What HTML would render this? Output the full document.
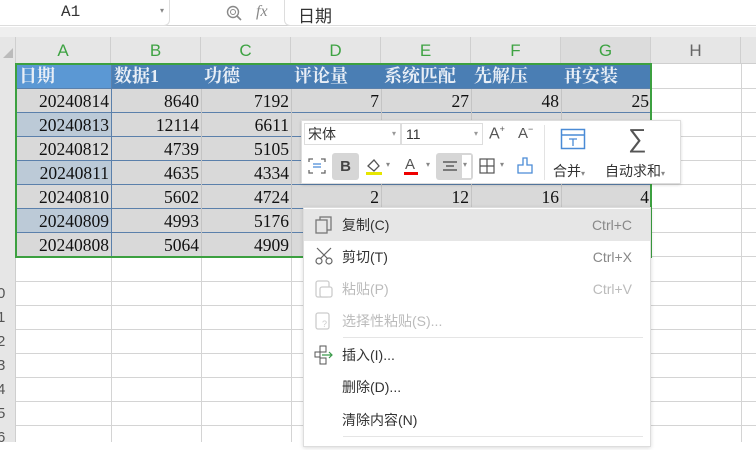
<!DOCTYPE html>
<html><head><meta charset="utf-8"><style>
*{margin:0;padding:0;box-sizing:border-box}
body{width:756px;height:442px;overflow:hidden;background:#fff;position:relative;font-family:"Liberation Sans","Noto Sans CJK SC",sans-serif}
.a{position:absolute}
.serif{font-family:"Liberation Serif","Noto Serif CJK SC",serif}
.cell{position:absolute;font-size:17.5px;text-align:right;padding-right:2px;line-height:24px;color:#111}
.hd{position:absolute;color:#e8eef6;font-size:18px;font-weight:bold;line-height:24px;padding-left:3px;font-family:"Liberation Serif","Noto Serif CJK SC",serif}
.ch{position:absolute;top:37px;height:27px;line-height:27px;text-align:center;color:#3ea343;font-size:17px;border-right:1px solid #cfcfcf}
.mi{position:absolute;left:304px;width:346px;height:32px;line-height:32px;font-size:14px;color:#333}
.mi .t{position:absolute;left:38px}
.mi .k{position:absolute;right:18px;color:#888}
.dis{color:#bbb}
</style></head><body>
<div class="a" style="left:0;top:0;width:756px;height:26px;background:#fff;border-bottom:1px solid #d0d0d0"></div>
<div class="a" style="left:0;top:0;width:170px;height:26px;border:1px solid #ddd;border-top:0;border-left:0;border-radius:0 0 6px 0"></div>
<div class="a" style="left:61px;top:3px;font-size:16px;color:#333;font-family:'Liberation Mono',monospace">A1</div>
<div class="a" style="left:160px;top:6px;font-size:8px;color:#888">▾</div>
<svg class="a" style="left:225px;top:4px" width="18" height="18"><circle cx="8" cy="8" r="5.5" fill="none" stroke="#888" stroke-width="1.4"/><circle cx="8" cy="8" r="2.5" fill="none" stroke="#888" stroke-width="1"/><path d="M12 12l4 4" stroke="#888" stroke-width="1.6"/></svg>
<div class="a" style="left:256px;top:3px;font-size:16px;color:#888;font-style:italic;font-family:'Liberation Serif',serif">fx</div>
<div class="a" style="left:284px;top:0;width:472px;height:26px;border-left:1px solid #ddd;border-bottom:1px solid #ddd;border-radius:0 0 0 6px"></div>
<div class="a" style="left:298px;top:2px;font-size:17px;color:#333">日期</div>
<div class="a" style="left:0;top:27px;width:756px;height:10px;background:#efefef"></div>
<div class="a" style="left:0;top:37px;width:756px;height:27px;background:#e6e6e6;border-bottom:1px solid #cfcfcf"></div>
<div class="a" style="left:0;top:37px;width:16px;height:27px;background:#e6e6e6;border-right:1px solid #cfcfcf"></div>
<div class="a" style="left:3px;top:48px;width:0;height:0;border-left:10px solid transparent;border-bottom:10px solid #bbb"></div>
<div class="ch" style="left:16px;width:95px">A</div>
<div class="ch" style="left:111px;width:90px">B</div>
<div class="ch" style="left:201px;width:90px">C</div>
<div class="ch" style="left:291px;width:90px">D</div>
<div class="ch" style="left:381px;width:90px">E</div>
<div class="ch" style="left:471px;width:90px">F</div>
<div class="ch" style="left:561px;width:90px;background:#dcdcdc">G</div>
<div class="ch" style="left:651px;width:90px;color:#666">H</div>
<div class="a" style="left:0;top:64px;width:16px;height:378px;background:#e6e6e6;border-right:1px solid #cfcfcf"></div>
<div class="a" style="left:-3px;top:282px;font-size:15px;color:#555;line-height:24px">0<br>1<br>2<br>3<br>4<br>5<br>6</div>
<svg class="a" style="left:16px;top:64px" width="740" height="378">
<g stroke="#d4d4d4" stroke-width="1">
<line x1="0" y1="217.5" x2="740" y2="217.5"/><line x1="0" y1="241.5" x2="740" y2="241.5"/><line x1="0" y1="265.5" x2="740" y2="265.5"/><line x1="0" y1="289.5" x2="740" y2="289.5"/><line x1="0" y1="313.5" x2="740" y2="313.5"/><line x1="0" y1="337.5" x2="740" y2="337.5"/><line x1="0" y1="361.5" x2="740" y2="361.5"/>
<line x1="635" y1="24.5" x2="740" y2="24.5"/><line x1="635" y1="48.5" x2="740" y2="48.5"/><line x1="635" y1="72.5" x2="740" y2="72.5"/><line x1="635" y1="96.5" x2="740" y2="96.5"/><line x1="635" y1="120.5" x2="740" y2="120.5"/><line x1="635" y1="144.5" x2="740" y2="144.5"/><line x1="635" y1="168.5" x2="740" y2="168.5"/><line x1="635" y1="192.5" x2="740" y2="192.5"/>
<line x1="95.5" y1="193" x2="95.5" y2="378"/><line x1="185.5" y1="193" x2="185.5" y2="378"/><line x1="275.5" y1="193" x2="275.5" y2="378"/><line x1="725.5" y1="0" x2="725.5" y2="378"/>
</g></svg>
<div class="a" style="left:16px;top:64px;width:635px;height:193px;background:#d9d9d9"></div>
<div class="a" style="left:16px;top:64px;width:635px;height:25px;background:#4a7eb4"></div>
<div class="a" style="left:16px;top:64px;width:95px;height:25px;background:#5b98d4"></div>
<div class="a" style="left:16px;top:113px;width:95px;height:24px;background:#bccad7"></div>
<div class="a" style="left:16px;top:161px;width:95px;height:24px;background:#bccad7"></div>
<div class="a" style="left:16px;top:209px;width:95px;height:24px;background:#bccad7"></div>
<svg class="a" style="left:16px;top:64px" width="636" height="194">
<g stroke="#5b80ab" stroke-width="1">
<line x1="0" y1="24.5" x2="635" y2="24.5"/><line x1="0" y1="48.5" x2="635" y2="48.5"/><line x1="0" y1="72.5" x2="635" y2="72.5"/><line x1="0" y1="96.5" x2="635" y2="96.5"/><line x1="0" y1="120.5" x2="635" y2="120.5"/><line x1="0" y1="144.5" x2="635" y2="144.5"/><line x1="0" y1="168.5" x2="635" y2="168.5"/>
<line x1="95.5" y1="0" x2="95.5" y2="193"/></g>
<g stroke="#c4c4c4"><line x1="185.5" y1="25" x2="185.5" y2="193"/><line x1="275.5" y1="25" x2="275.5" y2="193"/><line x1="365.5" y1="25" x2="365.5" y2="193"/><line x1="455.5" y1="25" x2="455.5" y2="193"/><line x1="545.5" y1="25" x2="545.5" y2="193"/></g>
</svg>
<div class="hd" style="left:16px;top:64px">日期</div>
<div class="hd" style="left:111px;top:64px">数据1</div>
<div class="hd" style="left:201px;top:64px">功德</div>
<div class="hd" style="left:291px;top:64px">评论量</div>
<div class="hd" style="left:381px;top:64px">系统匹配</div>
<div class="hd" style="left:471px;top:64px">先解压</div>
<div class="hd" style="left:561px;top:64px">再安装</div>
<div class="serif">
<div class="cell" style="left:16px;top:89px;width:95px">20240814</div><div class="cell" style="left:111px;top:89px;width:90px">8640</div><div class="cell" style="left:201px;top:89px;width:90px">7192</div><div class="cell" style="left:291px;top:89px;width:90px">7</div><div class="cell" style="left:381px;top:89px;width:90px">27</div><div class="cell" style="left:471px;top:89px;width:90px">48</div><div class="cell" style="left:561px;top:89px;width:90px">25</div>
<div class="cell" style="left:16px;top:113px;width:95px">20240813</div><div class="cell" style="left:111px;top:113px;width:90px">12114</div><div class="cell" style="left:201px;top:113px;width:90px">6611</div>
<div class="cell" style="left:16px;top:137px;width:95px">20240812</div><div class="cell" style="left:111px;top:137px;width:90px">4739</div><div class="cell" style="left:201px;top:137px;width:90px">5105</div>
<div class="cell" style="left:16px;top:161px;width:95px">20240811</div><div class="cell" style="left:111px;top:161px;width:90px">4635</div><div class="cell" style="left:201px;top:161px;width:90px">4334</div>
<div class="cell" style="left:16px;top:185px;width:95px">20240810</div><div class="cell" style="left:111px;top:185px;width:90px">5602</div><div class="cell" style="left:201px;top:185px;width:90px">4724</div><div class="cell" style="left:291px;top:185px;width:90px">2</div><div class="cell" style="left:381px;top:185px;width:90px">12</div><div class="cell" style="left:471px;top:185px;width:90px">16</div><div class="cell" style="left:561px;top:185px;width:90px">4</div>
<div class="cell" style="left:16px;top:209px;width:95px">20240809</div><div class="cell" style="left:111px;top:209px;width:90px">4993</div><div class="cell" style="left:201px;top:209px;width:90px">5176</div>
<div class="cell" style="left:16px;top:233px;width:95px">20240808</div><div class="cell" style="left:111px;top:233px;width:90px">5064</div><div class="cell" style="left:201px;top:233px;width:90px">4909</div>
</div>
<div class="a" style="left:15px;top:63px;width:637px;height:195px;border:2px solid #3ca040"></div>
<div class="a" style="left:301px;top:120px;width:380px;height:64px;background:#fff;border:1px solid #ddd;box-shadow:0 1px 3px rgba(0,0,0,.15)"></div>
<div class="a" style="left:304px;top:123px;width:97px;height:22px;border:1px solid #ddd;font-size:14px;line-height:20px;padding-left:3px;color:#333">宋体<span style="position:absolute;right:4px;font-size:8px;color:#999">▾</span></div>
<div class="a" style="left:401px;top:123px;width:82px;height:22px;border:1px solid #ddd;font-size:14px;line-height:20px;padding-left:4px;color:#333">11<span style="position:absolute;right:4px;font-size:8px;color:#999">▾</span></div>
<div class="a" style="left:489px;top:124px;font-size:16px;color:#555">A<sup style="font-size:9px">+</sup></div>
<div class="a" style="left:518px;top:124px;font-size:15px;color:#555">A<sup style="font-size:9px">−</sup></div>
<div class="a" style="left:544px;top:125px;width:1px;height:55px;background:#e3e3e3"></div>
<svg class="a" style="left:560px;top:128px" width="26" height="22"><rect x="1.5" y="1.5" width="23" height="19" fill="none" stroke="#4a8bd6" stroke-width="1.5"/><line x1="1.5" y1="7" x2="24.5" y2="7" stroke="#4a8bd6" stroke-width="1.5"/><path d="M9 11h8M13 11v7" stroke="#4a8bd6" stroke-width="1.3"/></svg>
<div class="a" style="left:628px;top:124px;font-size:26px;color:#555;line-height:28px">∑</div>
<div class="a" style="left:553px;top:161px;font-size:14px;color:#333">合并<span style="font-size:8px;color:#888">▾</span></div>
<div class="a" style="left:605px;top:161px;font-size:14px;color:#333">自动求和<span style="font-size:8px;color:#888">▾</span></div>
<svg class="a" style="left:307px;top:157px" width="20" height="18"><path d="M2 5V2h4M14 2h4v3M2 13v3h4M14 16h4v-3" stroke="#666" fill="none" stroke-width="1.3"/><path d="M6 7h8M6 10h8" stroke="#4a8bd6" stroke-width="1.3"/></svg>
<div class="a" style="left:332px;top:153px;width:27px;height:27px;background:#d6d6d6;border-radius:3px;text-align:center;line-height:27px;font-weight:bold;font-size:15px;color:#444">B</div>
<svg class="a" style="left:364px;top:156px" width="20" height="21"><path d="M4 10l6-6 5 6-5 5z" stroke="#555" fill="none" stroke-width="1.3"/><rect x="2" y="16" width="16" height="3" fill="#e6e600"/></svg>
<div class="a" style="left:386px;top:160px;font-size:8px;color:#888">▾</div>
<div class="a" style="left:405px;top:156px;font-size:15px;color:#555">A</div>
<div class="a" style="left:404px;top:172px;width:14px;height:3px;background:#e00"></div>
<div class="a" style="left:426px;top:160px;font-size:8px;color:#888">▾</div>
<div class="a" style="left:436px;top:153px;width:37px;height:27px;background:#d6d6d6;border-radius:3px"></div>
<div class="a" style="left:462px;top:155px;width:9px;height:23px;background:#fff"></div>
<svg class="a" style="left:441px;top:159px" width="18" height="14"><path d="M2 3h14M5 7h8M2 11h14" stroke="#444" stroke-width="1.3"/></svg>
<div class="a" style="left:463px;top:160px;font-size:8px;color:#888">▾</div>
<svg class="a" style="left:478px;top:157px" width="18" height="18"><rect x="2" y="2" width="14" height="14" fill="none" stroke="#555" stroke-width="1.2"/><path d="M9 2v14M2 9h14" stroke="#555" stroke-width="1.2"/></svg>
<div class="a" style="left:500px;top:160px;font-size:8px;color:#888">▾</div>
<svg class="a" style="left:515px;top:156px" width="20" height="20"><path d="M8 2h4v7h5v8H3V9h5z" stroke="#4a8bd6" fill="none" stroke-width="1.3"/></svg>
<div class="a" style="left:303px;top:207px;width:348px;height:240px;background:#fff;border:1px solid #ddd;box-shadow:0 1px 4px rgba(0,0,0,.15)"></div>
<div class="mi" style="top:209px;background:#e6e6e6"><span class="t">复制(C)</span><span class="k">Ctrl+C</span></div>
<svg class="a" style="left:314px;top:215px" width="20" height="20"><rect x="6" y="2" width="11" height="13" fill="none" stroke="#777" stroke-width="1.3"/><rect x="2" y="5" width="11" height="13" fill="#e6e6e6" stroke="#777" stroke-width="1.3"/></svg>
<div class="mi" style="top:241px"><span class="t">剪切(T)</span><span class="k">Ctrl+X</span></div>
<svg class="a" style="left:314px;top:246px" width="20" height="20"><path d="M3 2l11 11M17 2L6 13" stroke="#666" stroke-width="1.2"/><circle cx="5" cy="15" r="3" fill="none" stroke="#666" stroke-width="1.2"/><circle cx="15" cy="15" r="3" fill="none" stroke="#666" stroke-width="1.2"/></svg>
<div class="mi dis" style="top:273px"><span class="t">粘贴(P)</span><span class="k" style="color:#bbb">Ctrl+V</span></div>
<svg class="a" style="left:314px;top:278px" width="20" height="22"><rect x="2" y="3" width="13" height="16" rx="2" fill="none" stroke="#ccc" stroke-width="1.3"/><rect x="6" y="9" width="12" height="10" rx="2" fill="#fff" stroke="#ccc" stroke-width="1.3"/></svg>
<div class="mi dis" style="top:305px"><span class="t">选择性粘贴(S)...</span></div>
<svg class="a" style="left:314px;top:310px" width="20" height="22"><rect x="2" y="3" width="13" height="16" rx="2" fill="none" stroke="#ccc" stroke-width="1.3"/><text x="8" y="17" font-size="9" fill="#ccc">?</text></svg>
<div class="a" style="left:343px;top:337px;width:300px;height:1px;background:#e5e5e5"></div>
<div class="mi" style="top:339px"><span class="t">插入(I)...</span></div>
<svg class="a" style="left:314px;top:345px" width="20" height="20"><rect x="6" y="1" width="6" height="6" fill="none" stroke="#555"/><rect x="1" y="7" width="5" height="5" fill="none" stroke="#555"/><rect x="6" y="13" width="6" height="6" fill="none" stroke="#555"/><path d="M8 10h10M15 7l3 3-3 3" stroke="#3a9a4a" fill="none" stroke-width="1.2"/></svg>
<div class="mi" style="top:371px"><span class="t">删除(D)...</span></div>
<div class="mi" style="top:404px"><span class="t">清除内容(N)</span></div>
<div class="a" style="left:343px;top:436px;width:300px;height:1px;background:#e5e5e5"></div>
</body></html>
